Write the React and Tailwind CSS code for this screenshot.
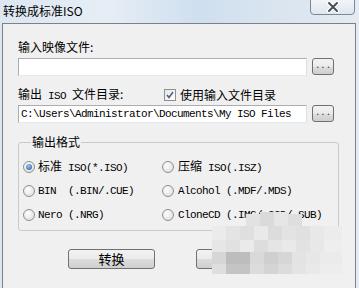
import React from "react";

const cjk = { fontFamily: '"Noto Sans CJK SC", "Noto Sans", sans-serif' };
const mono = { fontFamily: '"Liberation Mono", "Noto Sans CJK SC", monospace' };

function Radio({ checked }) {
  return (
    <span className="relative inline-block w-[12px] h-[12px] rounded-full border border-[#8e8f8f] bg-[radial-gradient(circle_at_40%_35%,#ffffff,#d8d8d8)] shrink-0">
      {checked && (
        <span className="absolute left-[2px] top-[2px] w-[6px] h-[6px] rounded-full bg-[radial-gradient(circle_at_40%_35%,#9fc7ee,#1d5596)]" />
      )}
    </span>
  );
}

function Dots() {
  return (
    <button className="w-[22px] h-[17px] rounded-[3px] border border-[#707070] bg-[linear-gradient(#f2f2f2,#ebebeb_50%,#dddddd_50%,#cfcfcf)] flex items-end justify-center pb-[3px]">
      <span className="text-[9px] leading-[9px] text-[#333] tracking-[0px]" style={mono}>...</span>
    </button>
  );
}

function Btn({ children }) {
  return (
    <button className="w-[87px] h-[20px] rounded-[3px] border border-[#707070] bg-[linear-gradient(#f2f2f2,#ebebeb_50%,#dddddd_50%,#cfcfcf)] flex items-center justify-center text-[13px] text-black" style={cjk}>
      {children}
    </button>
  );
}

const mosaic = [
  [246, 214, 14, 12, "#e2e2e2"],
  [260, 212, 14, 14, "#dadada"],
  [274, 212, 14, 14, "#e6e6e6"],
  [288, 214, 14, 12, "#dedede"],
  [212, 226, 14, 14, "#ebebeb"],
  [226, 226, 14, 14, "#e4e4e4"],
  [240, 226, 14, 14, "#dfdfdf"],
  [254, 226, 14, 14, "#e9e9e9"],
  [268, 226, 14, 14, "#dcdcdc"],
  [282, 226, 14, 14, "#e3e3e3"],
  [296, 226, 14, 14, "#e0e0e0"],
  [310, 226, 14, 14, "#e8e8e8"],
  [324, 226, 18, 14, "#ececec"],
  [212, 240, 14, 12, "#e6e6e6"],
  [226, 240, 14, 12, "#e1e1e1"],
  [240, 240, 14, 12, "#eaeaea"],
  [254, 240, 14, 12, "#dddddd"],
  [268, 240, 14, 12, "#e5e5e5"],
  [282, 240, 14, 12, "#e9e9e9"],
  [296, 240, 14, 12, "#e2e2e2"],
  [310, 240, 14, 12, "#e8e8e8"],
  [324, 240, 18, 12, "#eeeeee"],
  [212, 252, 14, 12, "#d6d6d6"],
  [226, 252, 24, 12, "#bdbdbd"],
  [250, 252, 14, 12, "#d9d9d9"],
  [264, 252, 14, 12, "#cfcfcf"],
  [278, 252, 14, 12, "#d6d6d6"],
  [292, 252, 14, 12, "#e3e3e3"],
  [306, 252, 14, 12, "#e7e7e7"],
  [320, 252, 22, 12, "#ebebeb"],
  [212, 264, 14, 10, "#dedede"],
  [226, 264, 24, 10, "#c4c4c4"],
  [250, 264, 14, 10, "#dcdcdc"],
  [264, 264, 14, 10, "#d4d4d4"],
  [278, 264, 14, 10, "#dcdcdc"],
  [292, 264, 14, 10, "#e4e4e4"],
  [306, 264, 14, 10, "#e9e9e9"],
  [320, 264, 22, 10, "#ededed"],
];

const lbl = "text-[11px] tracking-[-0.6px] text-black whitespace-pre";

export default function App() {
  return (
    <div className="relative w-[359px] h-[288px] overflow-hidden bg-[linear-gradient(90deg,#dce7f2,#e6edf5_30%,#cfdff0_55%,#d9e4ef_75%,#e4ebf3)]" style={cjk}>
      {/* title bar */}
      <div className="h-[23px] flex items-start justify-between">
        <span className="pl-[3px] pt-[3px] text-[12px] leading-[16px] text-black" style={cjk}>转换成标准ISO</span>
        <div className="mr-[4px] mt-[-2px] w-[45px] h-[17px] rounded-b-[4px] border border-[#7a8897] bg-[linear-gradient(#f3f6f9,#dfe6ee)] flex items-center justify-center">
          <svg width="14" height="12" viewBox="0 0 14 12">
            <path d="M3 2 L11 10 M11 2 L3 10" stroke="#ffffff" strokeWidth="4" strokeLinecap="round" />
            <path d="M3 2 L11 10 M11 2 L3 10" stroke="#4a4f55" strokeWidth="2" strokeLinecap="round" />
          </svg>
        </div>
      </div>

      {/* client */}
      <div className="ml-[2px] mr-[3px] h-[265px] border-l border-t border-r border-[#7d8186] bg-[#f0f0f0] pt-[15px] pl-[15px]">
        <div className="text-[12px] leading-[16px] text-black" style={cjk}>输入映像文件:</div>
        <div className="mt-[3px] flex items-start gap-[5px]">
          <div className="w-[289px] h-[18px] bg-white border border-[#abadb3] border-b-[#e3e9ef] border-r-[#dbdfe6]" />
          <Dots />
        </div>

        <div className="mt-[11px] flex items-center h-[16px]">
          <span className="w-[146px] text-[12px] leading-[16px] text-black whitespace-nowrap" style={cjk}>
            输出<span className="text-[11px] tracking-[-0.6px] whitespace-pre" style={mono}> ISO </span>文件目录:
          </span>
          <span className="relative w-[12px] h-[12px] border border-[#8e8f8f] bg-[linear-gradient(135deg,#e6e6e6,#ffffff)] flex items-center justify-center">
            <svg width="10" height="10" viewBox="0 0 10 10">
              <path d="M2 5 L4 7.5 L8 2" stroke="#4d6185" strokeWidth="1.6" fill="none" />
            </svg>
          </span>
          <span className="ml-[4px] text-[12px] leading-[16px] text-black" style={cjk}>使用输入文件目录</span>
        </div>

        <div className="mt-[2px] flex items-start gap-[5px]">
          <div className="w-[289px] h-[18px] bg-white border border-[#abadb3] border-b-[#e3e9ef] border-r-[#dbdfe6] flex items-center pl-[2px] overflow-hidden">
            <span className="text-[11px] leading-[14px] tracking-[-0.6px] text-black whitespace-nowrap" style={mono}>C:\Users\Administrator\Documents\My ISO Files</span>
          </div>
          <Dots />
        </div>

        <fieldset className="mt-[11px] ml-[0px] w-[321px] h-[97px] border border-[#c8cbce] rounded-[3px] pl-[4px] pt-[9px]">
          <legend className="ml-[8px] px-[1px] text-[12px] leading-[16px] text-black" style={cjk}>输出格式</legend>
          <div className="grid grid-cols-[139px_1fr] gap-y-[8px]">
            <div className="flex items-center gap-[3px] h-[16px]">
              <Radio checked />
              <span className={lbl} style={mono}><span className="text-[12px] tracking-normal" style={cjk}>标准</span> ISO(*.ISO)</span>
            </div>
            <div className="flex items-center gap-[4px] h-[16px]">
              <Radio />
              <span className={lbl} style={mono}><span className="text-[12px] tracking-normal" style={cjk}>压缩</span> ISO(.ISZ)</span>
            </div>
            <div className="flex items-center gap-[3px] h-[16px]">
              <Radio />
              <span className={lbl} style={mono}>BIN  (.BIN/.CUE)</span>
            </div>
            <div className="flex items-center gap-[4px] h-[16px]">
              <Radio />
              <span className={lbl} style={mono}>Alcohol (.MDF/.MDS)</span>
            </div>
            <div className="flex items-center gap-[3px] h-[16px]">
              <Radio />
              <span className={lbl} style={mono}>Nero (.NRG)</span>
            </div>
            <div className="flex items-center gap-[4px] h-[16px]">
              <Radio />
              <span className={lbl} style={mono}>CloneCD (.IMG/.CCD/.SUB)</span>
            </div>
          </div>
        </fieldset>

        <div className="mt-[18px] pl-[50px] flex gap-[41px]">
          <Btn>转换</Btn>
          <Btn>取消</Btn>
        </div>
      </div>

      {mosaic.map(([x, y, w, h, c], i) => (
        <div key={i} className="absolute" style={{ left: x, top: y, width: w, height: h, background: c }} />
      ))}
    </div>
  );
}
